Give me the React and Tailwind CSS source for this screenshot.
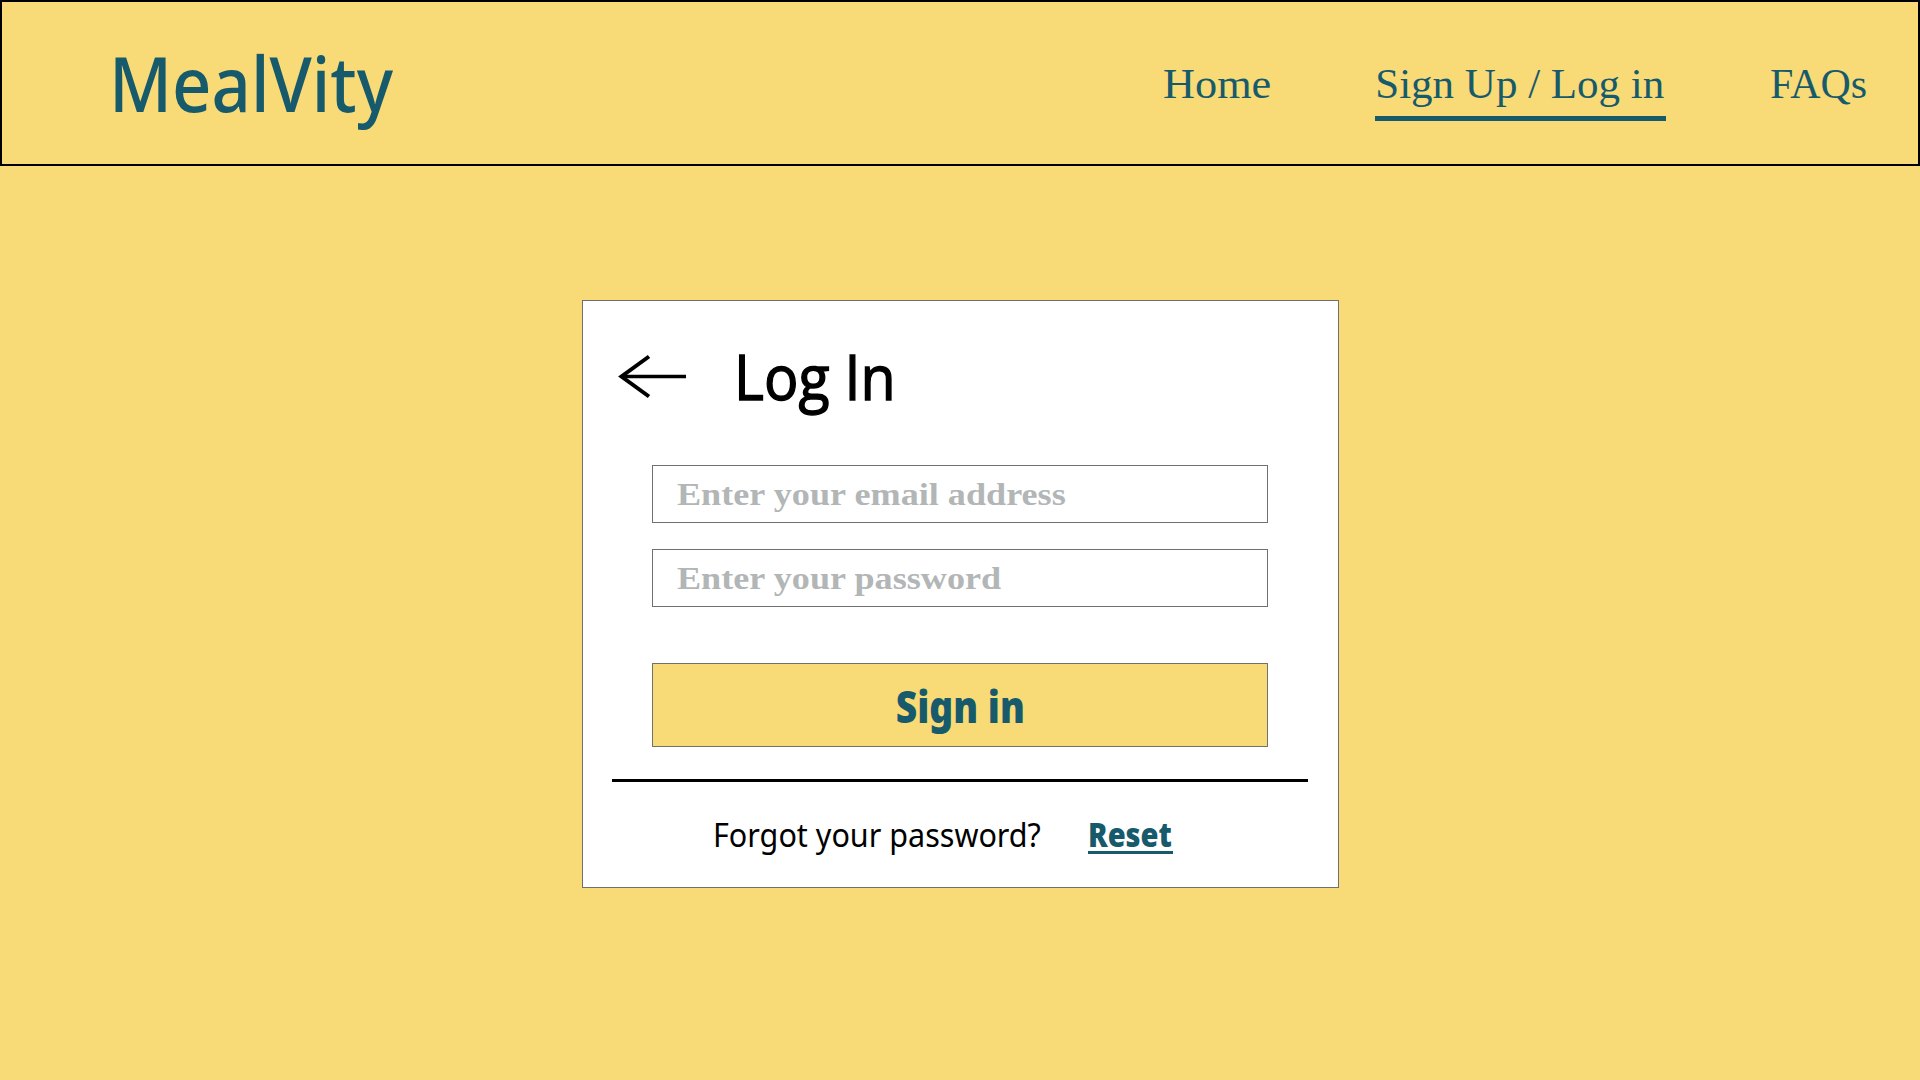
const sans = 'font-["Noto_Sans",sans-serif]';
const display = 'font-["Open_Sans",sans-serif]';

function Header() {
  return (
    <header className="flex h-[166px] items-center justify-between border-2 border-black pr-[50px] pl-[107px] text-[#175a6b]">
      <h1
        className={`${sans} mb-[2px] origin-left scale-x-[0.893] text-[77px] leading-none font-medium whitespace-nowrap`}
      >
        MealVity
      </h1>
      <nav className='flex items-center font-["Liberation_Serif",serif] text-[43px] leading-[66px] whitespace-nowrap'>
        <a href="#home" className="mr-[104px] w-[108px] pt-px">
          <span className="inline-block origin-left scale-x-[1.03]">Home</span>
        </a>
        <a
          href="#login"
          className="mr-[104.4px] h-[76px] w-[290.4px] border-y-[5px] border-t-transparent border-b-[#175a6b] pt-px"
        >
          Sign Up / Log in
        </a>
        <a href="#faqs" className="w-[98px] pt-px">
          <span className="inline-block origin-left scale-x-[0.975]">FAQs</span>
        </a>
      </nav>
    </header>
  );
}

function Field({ label }) {
  return (
    <label className='flex h-[58px] w-[616px] items-center border border-[#707070] bg-white pl-[24px] font-["Liberation_Serif",serif] text-[32px] leading-none font-bold whitespace-nowrap text-[#b2b6b6]'>
      <span className="inline-block origin-left scale-x-[1.13]">{label}</span>
    </label>
  );
}

function BackArrow() {
  return (
    <svg className="h-[46px] w-[68px]" viewBox="0 0 68 46" fill="none" stroke="#000" aria-label="Back">
      <path d="M3 23.5H68" strokeWidth="3.6" />
      <path d="M31 3.5L3.5 23.5L31 43.5" strokeWidth="4" />
    </svg>
  );
}

function LoginCard() {
  return (
    <main className="mt-[134px] ml-[582px] flex h-[588px] w-[757px] flex-col border border-[#707070] bg-white">
      <div className="flex h-[150px] items-center pl-[35px]">
        <BackArrow />
        <h2
          className={`${display} mb-[2px] ml-[48px] origin-left scale-x-[0.91] text-[63px] leading-none font-medium whitespace-nowrap [-webkit-text-stroke:1.4px_black]`}
        >
          Log In
        </h2>
      </div>
      <form className="mt-[14px] ml-[69px] flex flex-col gap-[26px]">
        <Field label="Enter your email address" />
        <Field label="Enter your password" />
        <button
          type="button"
          className={`${sans} mt-[30px] flex h-[84px] w-[616px] items-center justify-center border border-[#707070] bg-[#f8da76] pt-[2px] pl-[1px] text-[44px] leading-none font-black text-[#175a6b]`}
        >
          <span className="inline-block scale-x-[0.845]">Sign in</span>
        </button>
      </form>
      <div className="mt-[32px] ml-[29.4px] h-[3px] w-[695.3px] bg-black" />
      <div className={`${sans} flex h-[104px] items-center pl-[130px] text-[33px] leading-[34px] whitespace-nowrap`}>
        <p className="w-[375px] pt-[2px]">
          <span className="inline-block origin-left scale-x-[0.925]">Forgot your password?</span>
        </p>
        <a
          href="#reset"
          className="h-10 w-[85px] border-y-[3px] border-t-transparent border-b-[#175a6b] pt-px font-black text-[#175a6b]"
        >
          <span className="inline-block origin-left scale-x-[0.88]">Reset</span>
        </a>
      </div>
    </main>
  );
}

export default function App() {
  return (
    <div className="h-[1080px] w-[1920px] overflow-hidden bg-[#f8da76] text-black">
      <Header />
      <LoginCard />
    </div>
  );
}
